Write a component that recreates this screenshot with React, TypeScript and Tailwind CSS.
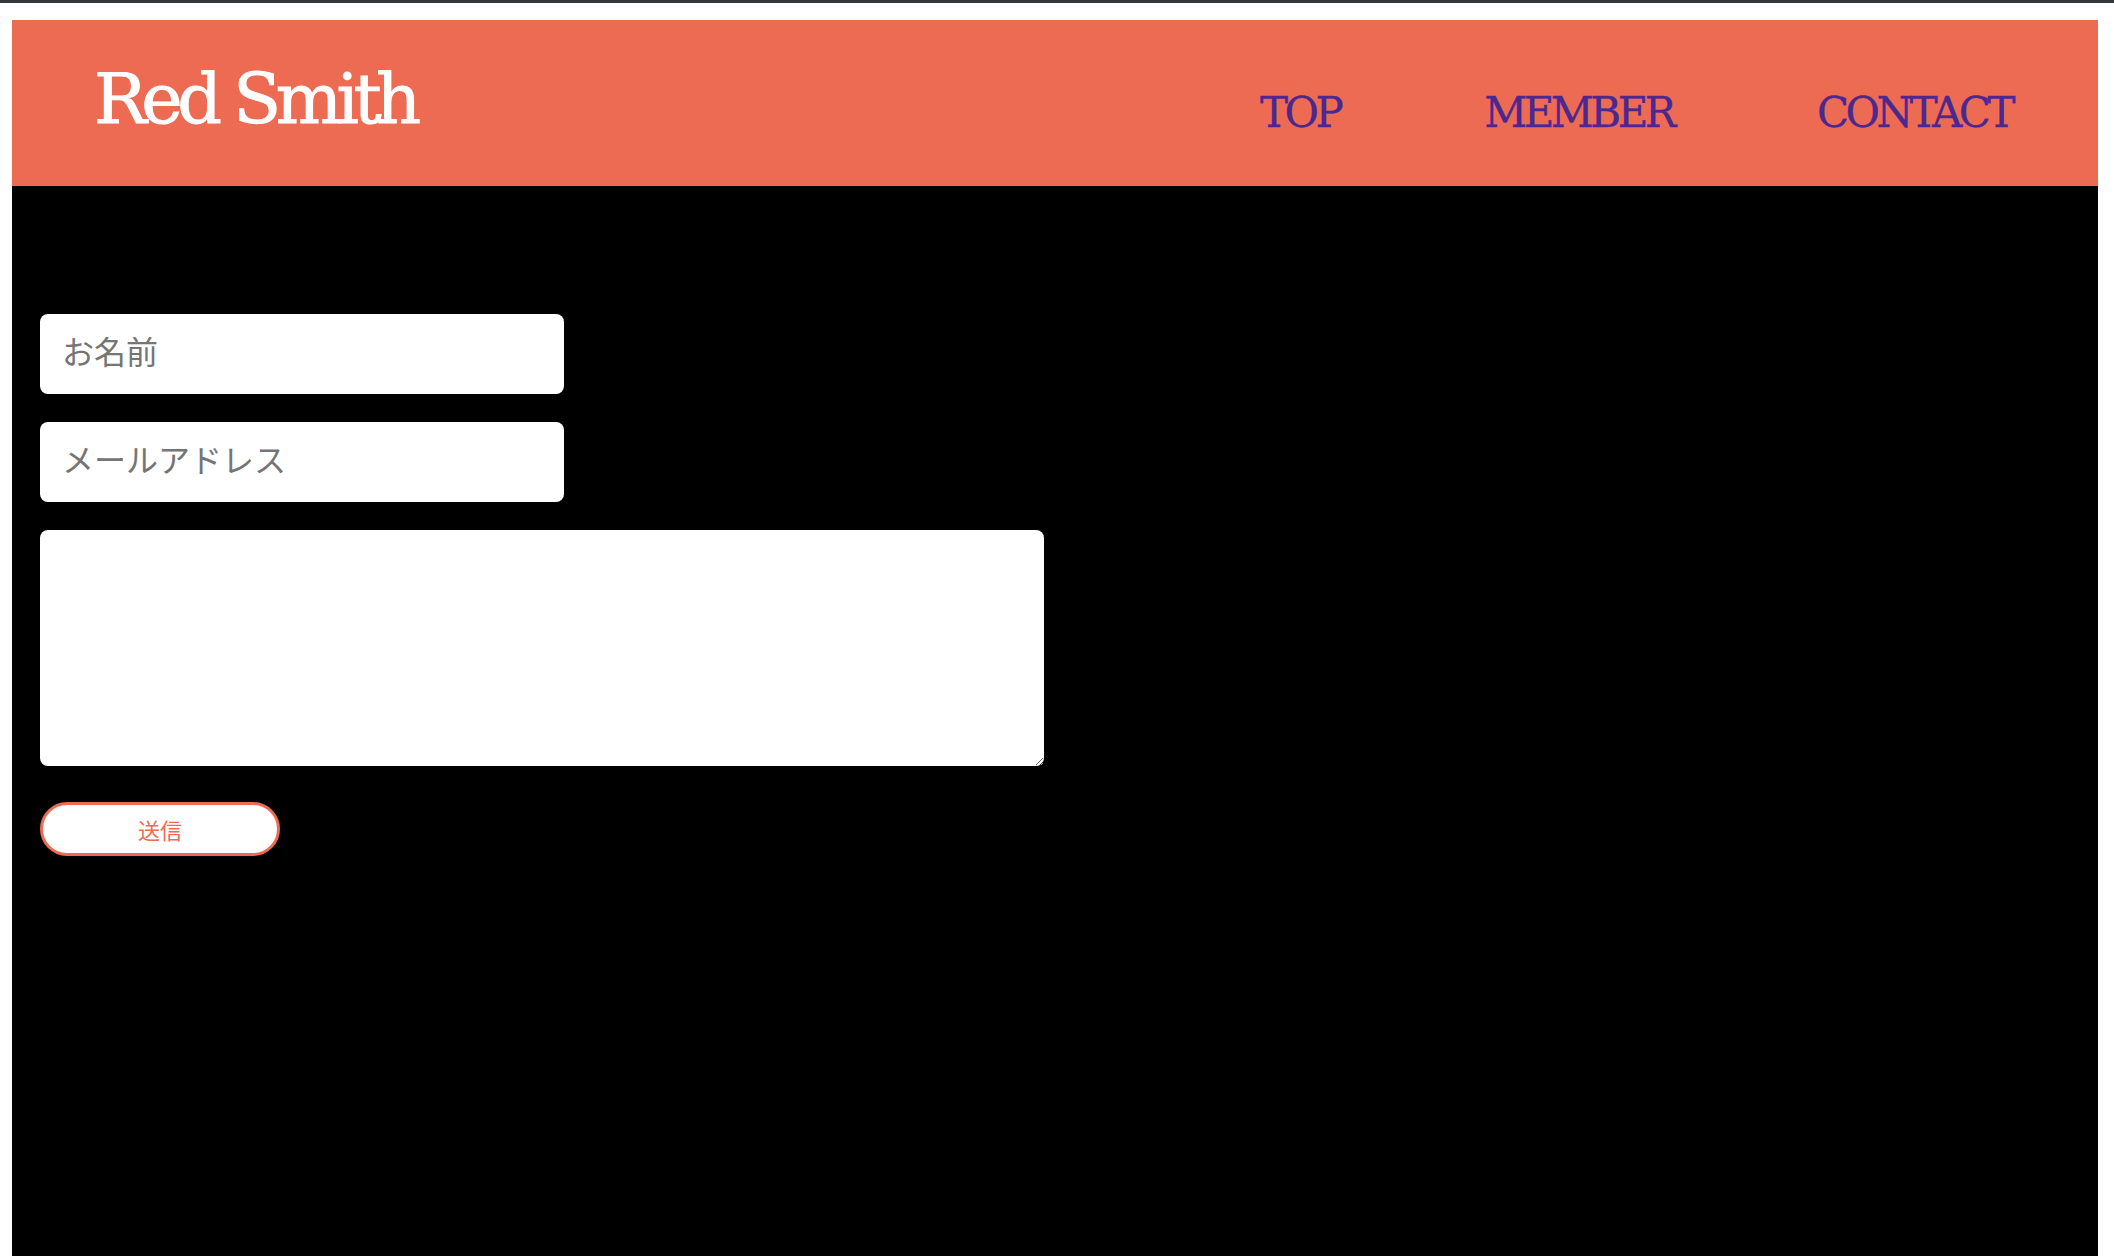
export default function App() {
  return (
    <div className="h-screen flex flex-col bg-white overflow-hidden">
      {/* browser chrome edge */}
      <div className="h-[3px] shrink-0 bg-[#35363a]" />

      <div className="flex-1 flex flex-col pt-[17px] pl-[12px] pr-[16px]">
        {/* Header */}
        <header className="h-[166px] shrink-0 bg-[#ee6b53] flex items-center justify-between pl-[82px] pr-[86px] font-['DejaVu_Serif','Liberation_Serif',serif]">
          <h1 className="mb-[8px] text-[70px] leading-none tracking-[-5.5px] text-white [-webkit-text-stroke:1px_white]">
            Red Smith
          </h1>
          <nav className="mt-[20px] flex items-center gap-[144px] text-[42px] leading-none tracking-[-3.5px] text-[#4a2890] [-webkit-text-stroke:0.3px_#4a2890]">
            <a href="#">TOP</a>
            <a href="#">MEMBER</a>
            <a href="#">CONTACT</a>
          </nav>
        </header>

        {/* Contact form */}
        <main className="flex-1 bg-black pt-[128px] pl-[28px]">
          <form className="flex flex-col items-start font-['Noto_Sans_CJK_JP','Noto_Sans',sans-serif]">
            <input
              type="text"
              placeholder="お名前"
              className="w-[524px] h-[80px] rounded-[8px] bg-white pl-[22px] pb-[8px] text-[32px] text-black placeholder:text-[#757575] outline-none"
            />
            <input
              type="email"
              placeholder="メールアドレス"
              className="mt-[28px] w-[524px] h-[80px] rounded-[8px] bg-white pl-[22px] pb-[8px] text-[32px] text-black placeholder:text-[#757575] outline-none"
            />
            <textarea className="mt-[28px] w-[1004px] h-[236px] rounded-[8px] bg-white p-[22px] text-[32px] text-black outline-none" />
            <button
              type="submit"
              className="mt-[36px] w-[240px] h-[54px] rounded-full border-[3px] border-[#ee6b53] bg-white text-[22px] leading-none text-[#ee6b53]"
            >
              送信
            </button>
          </form>
        </main>
      </div>
    </div>
  );
}
